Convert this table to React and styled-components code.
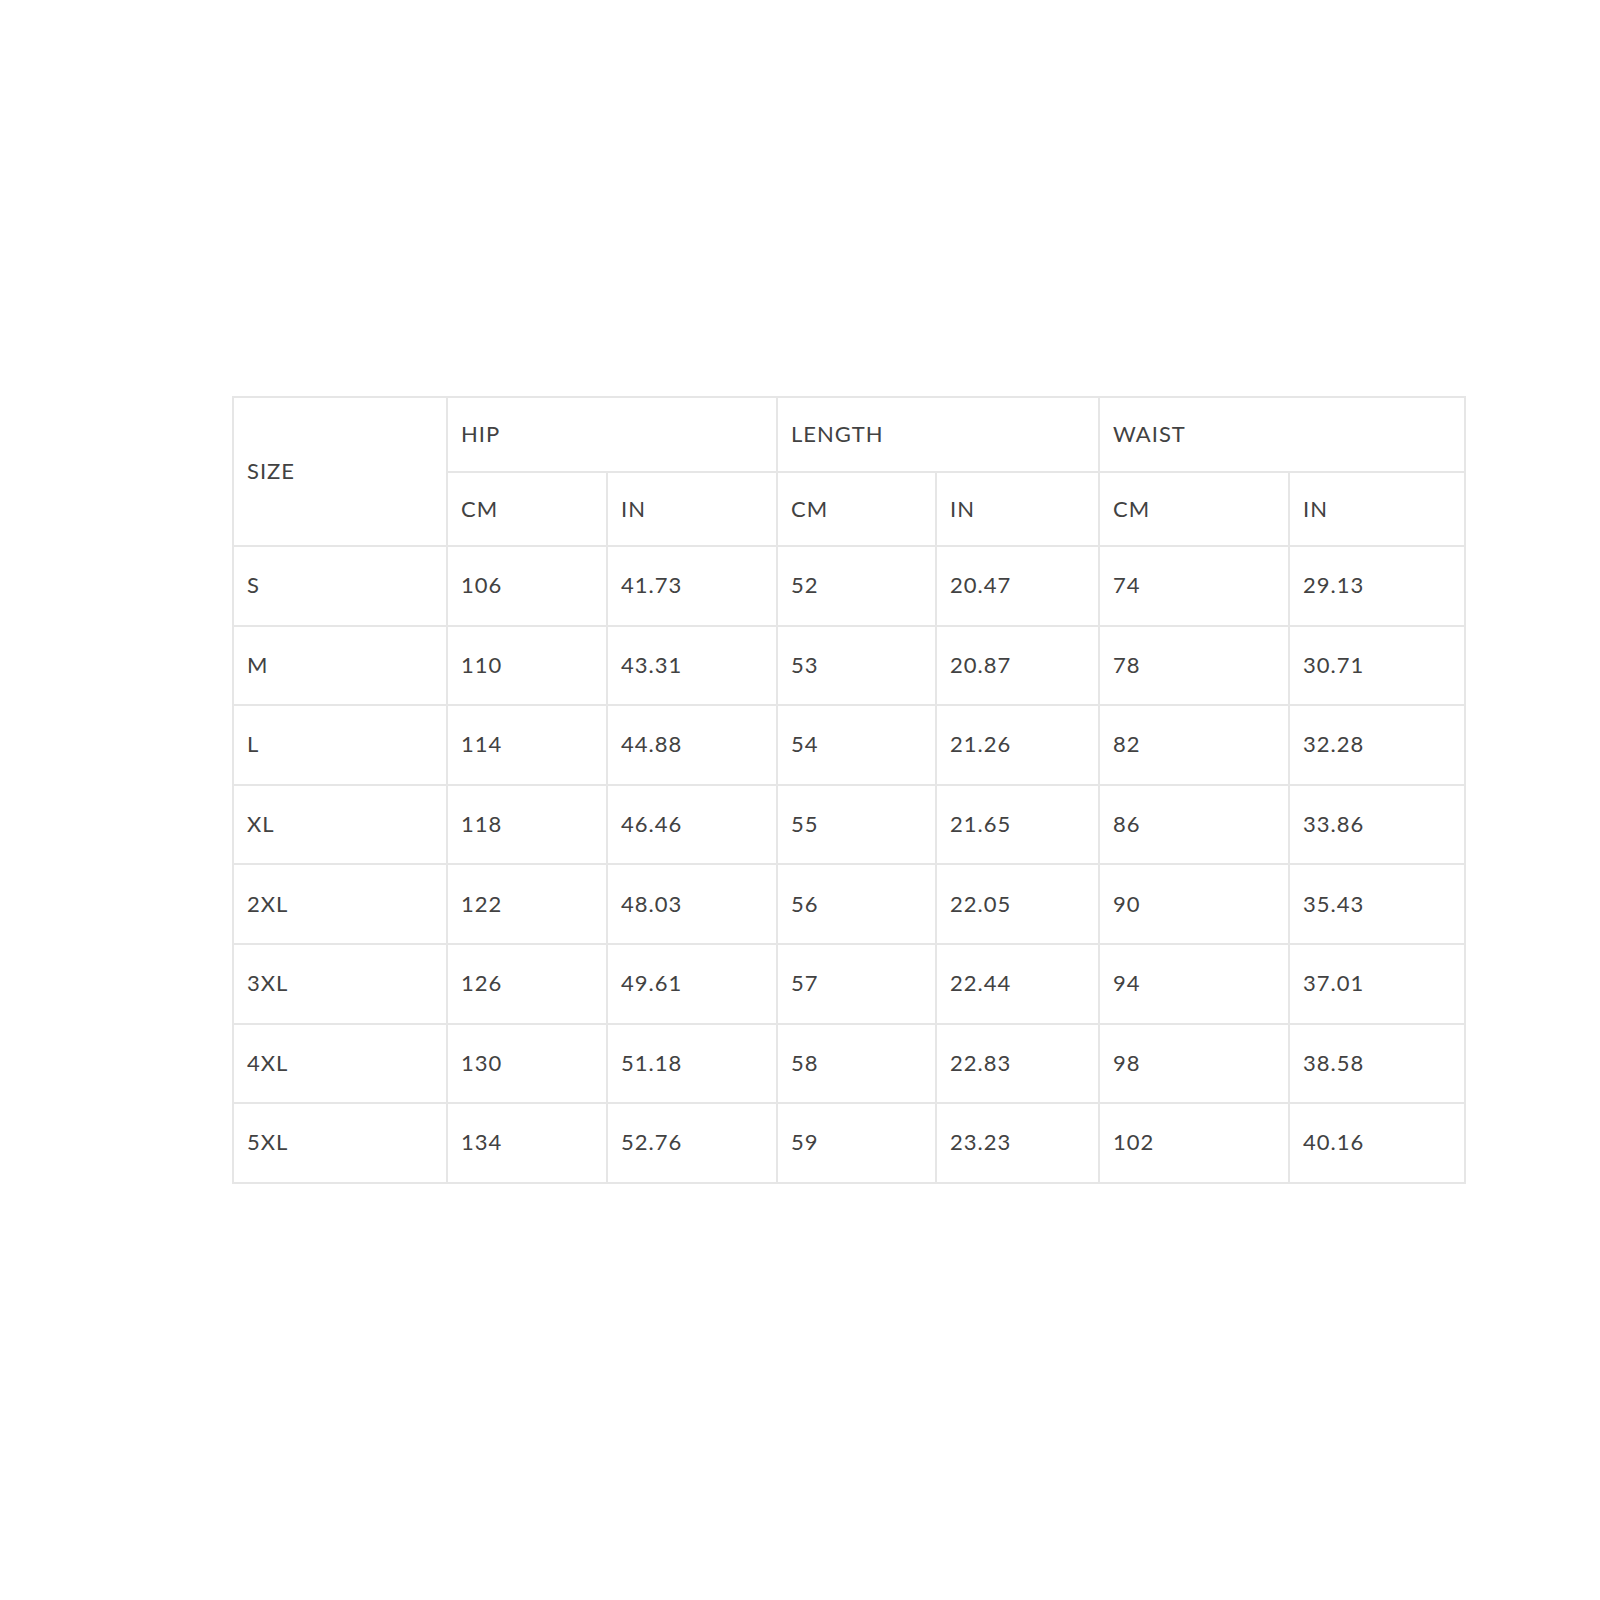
import React from 'react'
import styled, { createGlobalStyle } from 'styled-components'

const GlobalStyle = createGlobalStyle`
  html, body { margin: 0; padding: 0; background: #ffffff; }
  body { font-family: Lato, "Liberation Sans", sans-serif; }
`

const rows = [
  ['S', '106', '41.73', '52', '20.47', '74', '29.13'],
  ['M', '110', '43.31', '53', '20.87', '78', '30.71'],
  ['L', '114', '44.88', '54', '21.26', '82', '32.28'],
  ['XL', '118', '46.46', '55', '21.65', '86', '33.86'],
  ['2XL', '122', '48.03', '56', '22.05', '90', '35.43'],
  ['3XL', '126', '49.61', '57', '22.44', '94', '37.01'],
  ['4XL', '130', '51.18', '58', '22.83', '98', '38.58'],
  ['5XL', '134', '52.76', '59', '23.23', '102', '40.16'],
]

const widths = [214, 160, 170, 159, 163, 190, 176]

function App() {
  return (
    <Page>
      <GlobalStyle />
      <Chart>
        <colgroup>
          {widths.map((w, i) => <col key={i} style={{ width: w }} />)}
        </colgroup>
        <thead>
          <HeadRow $h={75}>
            <Cell rowSpan={2}>SIZE</Cell>
            <Cell colSpan={2}>HIP</Cell>
            <Cell colSpan={2}>LENGTH</Cell>
            <Cell colSpan={2}>WAIST</Cell>
          </HeadRow>
          <HeadRow $h={74}>
            <Cell>CM</Cell>
            <Cell>IN</Cell>
            <Cell>CM</Cell>
            <Cell>IN</Cell>
            <Cell>CM</Cell>
            <Cell>IN</Cell>
          </HeadRow>
        </thead>
        <tbody>
          {rows.map((r) => (
            <BodyRow key={r[0]}>
              {r.map((v, i) => <Cell key={i}>{v}</Cell>)}
            </BodyRow>
          ))}
        </tbody>
      </Chart>
    </Page>
  )
}
export default App

const Page = styled.div`
  width: 1600px;
  height: 1600px;
  padding: 396px 0 0 232px;
  box-sizing: border-box;
`
const Chart = styled.table`
  border-collapse: collapse;
  table-layout: fixed;
  width: 1232px;
  border: 2px solid #e6e6e6;
  color: #424242;
`
const HeadRow = styled.tr`
  height: ${(p) => p.$h}px;
`
const BodyRow = styled.tr`
  height: 79.6px;
`
const Cell = styled.td`
  border: 2px solid #e6e6e6;
  padding: 0 0 2px 13px;
  font-size: 22px;
  letter-spacing: 1px;
  text-align: left;
  vertical-align: middle;
  font-weight: 400;
`
